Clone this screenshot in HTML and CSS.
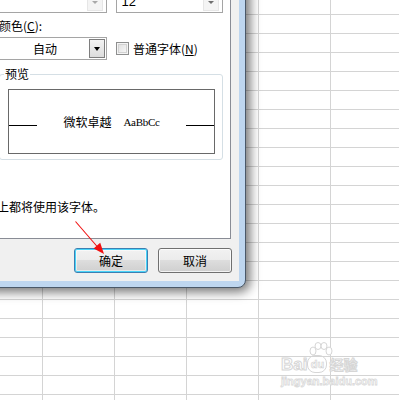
FILE: index.html
```html
<!DOCTYPE html>
<html lang="zh-CN">
<head>
<meta charset="utf-8">
<title>字体</title>
<link rel="stylesheet" href="styles.css">
</head>
<body>
<div class="dialog">
  <div class="client">
    <div class="panel">
      <div class="row row-top">
        <div class="combo combo-under"><span class="combo-text"></span><span class="drop drop-off"><i class="tri"></i></span></div>
        <div class="combo combo-size"><span class="combo-text left">12</span><span class="drop drop-off dark"><i class="tri"></i></span></div>
      </div>
      <div class="label">颜色(<u>C</u>):</div>
      <div class="row row-color">
        <div class="combo combo-color"><span class="combo-text">自动</span><span class="drop drop-btn"><i class="tri"></i></span></div>
        <div class="check"><span class="box"></span><span class="check-text">普通字体(<u>N</u>)</span></div>
      </div>
      <div class="group">
        <span class="legend">预览</span>
        <div class="preview">
          <span class="base"></span>
          <span class="sample"><span class="cjk">微软卓越</span><span class="latin">AaBbCc</span></span>
          <span class="base"></span>
        </div>
      </div>
      <div class="note">打印机上都将使用该字体。</div>
    </div>
    <div class="buttons">
      <button class="btn default">确定</button>
      <button class="btn">取消</button>
    </div>
  </div>
</div>
<svg class="arrow" width="399" height="400" viewBox="0 0 399 400">
  <line x1="75.5" y1="221.5" x2="98" y2="247.5" stroke="#f01010" stroke-width="1.1"/>
  <polygon points="104,254 93.6,248.4 100.2,242.8" fill="#f01010"/>
</svg>
<div class="watermark">
  <div class="wm-top">
    <span class="wm-bai">Bai</span><span class="wm-du">du</span><span class="wm-jy">经验</span>
    <svg class="wm-paw" width="26" height="16" viewBox="0 0 26 16">
      <ellipse cx="5" cy="9" rx="3" ry="4" fill="#fff" stroke="#d6d6d6"/>
      <ellipse cx="10" cy="4" rx="3" ry="3.5" fill="#fff" stroke="#d6d6d6"/>
      <ellipse cx="16" cy="4" rx="3" ry="3.5" fill="#fff" stroke="#d6d6d6"/>
      <ellipse cx="21" cy="9" rx="3" ry="4" fill="#fff" stroke="#d6d6d6"/>
    </svg>
  </div>
  <div class="wm-url">jingyan.baidu.com</div>
</div>
</body>
</html>
```
FILE: styles.css
```css
html, body {
  margin: 0;
  padding: 0;
}
body {
  width: 399px;
  height: 400px;
  overflow: hidden;
  position: relative;
  font-family: "Noto Sans CJK SC", "Noto Sans", sans-serif;
  font-size: 12px;
  color: #000;
  background-color: #fff;
  background-image:
    linear-gradient(to right, #d4d4d4 1px, transparent 1px),
    linear-gradient(to bottom, #d4d4d4 1px, transparent 1px);
  background-size: 72px 19px;
  background-position: 42px 14px;
}
.dialog {
  position: absolute;
  left: -40px;
  top: -40px;
  width: 286px;
  height: 328px;
  box-sizing: border-box;
  border: 1px solid #4a5868;
  border-radius: 8px;
  padding: 6px;
  background: #bed6ef;
  box-shadow: 2px 2px 11px 2px rgba(0, 0, 0, 0.55);
}
.client {
  height: 100%;
  box-sizing: border-box;
  background: #f0f0f0;
  padding-top: 8px;
  display: flex;
  flex-direction: column;
}
.panel {
  margin: 0 8px;
  height: 264px;
  box-sizing: border-box;
  border: 1px solid #898c95;
  background: #fff;
  padding: 15px 7px 0 23px;
}
.row {
  display: flex;
  align-items: center;
}
.row-top {
  height: 22px;
}
.combo {
  width: 108px;
  box-sizing: border-box;
  border: 1px solid #a5a5a5;
  background: #fff;
  display: flex;
  align-items: center;
  padding: 1px;
}
.row-top .combo {
  height: 22px;
}
.combo-size {
  margin-left: 9px;
}
.combo-text {
  flex: 1;
  text-align: center;
  line-height: 16px;
}
.combo-text.left {
  text-align: left;
  padding-left: 4px;
  font-family: "Liberation Sans", sans-serif;
  font-size: 13px;
}
.drop {
  width: 16px;
  height: 18px;
  box-sizing: border-box;
  display: flex;
  align-items: center;
  justify-content: center;
}
.drop-off {
  margin-right: 2px;
  background: #f4f4f4;
  border: 1px solid #e6e6e6;
}
.tri {
  width: 0;
  height: 0;
  border-left: 3px solid transparent;
  border-right: 3px solid transparent;
  border-top: 3px solid #000;
}
.drop-off .tri {
  border-top-color: #a9a9a9;
}
.drop-off.dark .tri {
  border-top-color: #6f6f6f;
}
.label {
  margin-top: 5px;
  line-height: 16px;
}
.row-color {
  margin-top: 3px;
  height: 23px;
}
.combo-color {
  height: 23px;
}
.drop-btn {
  height: 19px;
  width: 16px;
  border: 1px solid #7e7e7e;
  background: linear-gradient(#f3f3f3, #dcdcdc);
}
.drop-btn .tri {
  border-left-width: 3.5px;
  border-right-width: 3.5px;
  border-top-width: 4px;
}
.check {
  display: flex;
  align-items: center;
  margin-left: 9px;
}
.box {
  width: 13px;
  height: 13px;
  box-sizing: border-box;
  border: 1px solid #8e8f8f;
  background: linear-gradient(135deg, #dcdcdc, #fbfbfb);
  box-shadow: inset 0 0 0 1px #f4f4f4, inset 0 0 0 2px #d2d2d2;
}
.check-text {
  margin-left: 4px;
  line-height: 16px;
}
.group {
  position: relative;
  margin-top: 14px;
  width: 224px;
  height: 86px;
  box-sizing: border-box;
  border: 1px solid #d5dfe5;
  border-radius: 3px;
  padding: 14px 0 0 8px;
}
.legend {
  position: absolute;
  top: -9px;
  left: 4px;
  padding: 0 1px;
  background: #fff;
  line-height: 16px;
}
.preview {
  width: 207px;
  height: 65px;
  box-sizing: border-box;
  border: 1px solid #696969;
  display: flex;
  align-items: center;
  justify-content: space-between;
}
.base {
  width: 28px;
  height: 1px;
  background: #000;
  margin-top: 8px;
}
.sample {
  display: flex;
  align-items: center;
  gap: 12px;
}
.cjk {
  font-size: 12px;
  line-height: 16px;
}
.latin {
  font-family: "Liberation Serif", serif;
  font-size: 11px;
  letter-spacing: -0.3px;
  line-height: 16px;
  margin-top: 1px;
  color: #000;
}
.note {
  margin-top: 39px;
  margin-left: -38px;
  line-height: 16px;
  white-space: nowrap;
}
.buttons {
  display: flex;
  justify-content: flex-end;
  gap: 10px;
  padding: 9px 7px 0 0;
}
.btn {
  width: 74px;
  height: 25px;
  margin: 0;
  padding: 0;
  box-sizing: border-box;
  font-family: "Noto Sans CJK SC", sans-serif;
  font-size: 12px;
  color: #000;
  border: 1px solid #707070;
  border-radius: 3px;
  background: linear-gradient(#f2f2f2 0%, #ebebeb 50%, #dddddd 50%, #cfcfcf 100%);
  box-shadow: inset 0 0 0 1px rgba(255, 255, 255, 0.75);
}
.btn.default {
  border-color: #3c7fb1;
  box-shadow: inset 0 0 0 1px #48d4f9, inset 0 0 0 2px rgba(255, 255, 255, 0.5);
}
.arrow {
  position: absolute;
  left: 0;
  top: 0;
  pointer-events: none;
}
.watermark {
  position: absolute;
  left: 281px;
  top: 342px;
  color: #fff;
  pointer-events: none;
}
.wm-top {
  position: relative;
  display: flex;
  align-items: flex-end;
  padding-top: 13px;
}
.wm-bai {
  font-family: "Liberation Sans", sans-serif;
  font-weight: bold;
  font-size: 17px;
  line-height: 17px;
  -webkit-text-stroke: 1px #d6d6d6;
}
.wm-du {
  display: inline-block;
  width: 18px;
  height: 16px;
  border-radius: 8px;
  border: 1px solid #d6d6d6;
  font-family: "Liberation Sans", sans-serif;
  font-weight: bold;
  font-size: 11px;
  line-height: 16px;
  text-align: center;
  color: #fff;
  -webkit-text-stroke: 0.6px #cfcfcf;
}
.wm-jy {
  margin-left: 2px;
  font-size: 14px;
  font-weight: bold;
  line-height: 17px;
  -webkit-text-stroke: 1px #d6d6d6;
}
.wm-paw {
  position: absolute;
  left: 27px;
  top: 0;
}
.wm-url {
  font-family: "Liberation Sans", sans-serif;
  font-size: 11px;
  font-weight: bold;
  line-height: 13px;
  margin-top: 2px;
  -webkit-text-stroke: 0.8px #d9d9d9;
}
```
